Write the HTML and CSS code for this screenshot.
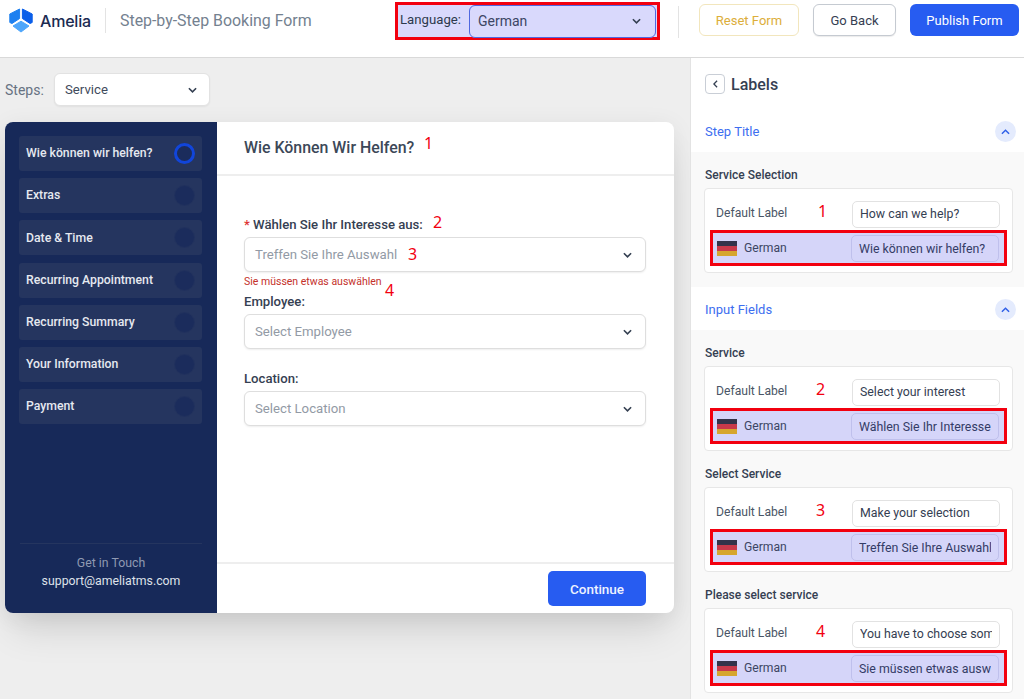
FILE: index.html
```html
<!DOCTYPE html>
<html lang="en">
<head>
<meta charset="utf-8">
<title>Step-by-Step Booking Form</title>
<link rel="stylesheet" href="styles.css">
</head>
<body>
<header class="topbar">
  <div class="brand">
    <svg class="logo" viewBox="0 0 24 25" width="24" height="25">
      <path d="M10.6 1 L10.6 10.5 L3 15.5 L0.8 14.5 L0.8 6 Z" fill="#1e80f0" stroke="#1e80f0" stroke-linejoin="round"/>
      <path d="M13.4 1 L13.4 10.5 L21 15.5 L23.2 14.5 L23.2 6 Z" fill="#0b5fe9" stroke="#0b5fe9" stroke-linejoin="round"/>
      <path d="M12 13.2 L20 18 L12 24 L4 18 Z" fill="#4ea6fb" stroke="#4ea6fb" stroke-linejoin="round"/>
    </svg>
    <span class="brand-name">Amelia</span>
  </div>
  <span class="page-title">Step-by-Step Booking Form</span>
  <div class="lang-box">
    <span class="lang-label">Language:</span>
    <div class="lang-select">
      <span>German</span>
      <svg class="chev" viewBox="0 0 10 6" width="9" height="6"><path d="M1 1l4 4 4-4" fill="none" stroke="#354052" stroke-width="1.8"/></svg>
    </div>
  </div>
  <span class="top-divider"></span>
  <button class="btn btn-reset">Reset Form</button>
  <button class="btn btn-back">Go Back</button>
  <button class="btn btn-publish">Publish Form</button>
</header>

<div class="workspace">
  <main class="canvas">
    <div class="steps-row">
      <span class="steps-label">Steps:</span>
      <div class="steps-select">
        <span>Service</span>
        <svg class="chev" viewBox="0 0 10 6" width="9" height="6"><path d="M1 1l4 4 4-4" fill="none" stroke="#354052" stroke-width="1.8"/></svg>
      </div>
    </div>
    <div class="card">
      <aside class="sidebar">
        <ul class="step-list">
          <li class="step"><span>Wie können wir helfen?</span><i class="dot dot-active"></i></li>
          <li class="step"><span>Extras</span><i class="dot"></i></li>
          <li class="step"><span>Date &amp; Time</span><i class="dot"></i></li>
          <li class="step"><span>Recurring Appointment</span><i class="dot"></i></li>
          <li class="step"><span>Recurring Summary</span><i class="dot"></i></li>
          <li class="step"><span>Your Information</span><i class="dot"></i></li>
          <li class="step"><span>Payment</span><i class="dot"></i></li>
        </ul>
        <div class="contact">
          <div class="contact-title">Get in Touch</div>
          <div class="contact-mail">support@ameliatms.com</div>
        </div>
      </aside>
      <section class="form">
        <div class="form-head">
          <h2>Wie Können Wir Helfen?</h2>
          <span class="mark mark-title">1</span>
        </div>
        <div class="form-body">
          <div class="field field-first">
            <label><em>*</em> Wählen Sie Ihr Interesse aus:</label>
            <span class="mark mark-label">2</span>
            <div class="select">
              <span>Treffen Sie Ihre Auswahl</span>
              <svg class="chev" viewBox="0 0 10 6" width="9" height="6"><path d="M1 1l4 4 4-4" fill="none" stroke="#354052" stroke-width="1.8"/></svg>
              <span class="mark mark-select">3</span>
            </div>
            <div class="error">Sie müssen etwas auswählen</div>
            <span class="mark mark-error">4</span>
          </div>
          <div class="field field-employee">
            <label>Employee:</label>
            <div class="select">
              <span>Select Employee</span>
              <svg class="chev" viewBox="0 0 10 6" width="9" height="6"><path d="M1 1l4 4 4-4" fill="none" stroke="#354052" stroke-width="1.8"/></svg>
            </div>
          </div>
          <div class="field field-location">
            <label>Location:</label>
            <div class="select">
              <span>Select Location</span>
              <svg class="chev" viewBox="0 0 10 6" width="9" height="6"><path d="M1 1l4 4 4-4" fill="none" stroke="#354052" stroke-width="1.8"/></svg>
            </div>
          </div>
        </div>
        <div class="form-foot"><button class="btn-continue">Continue</button></div>
      </section>
    </div>
  </main>

  <aside class="panel">
    <div class="panel-head">
      <span class="back"><svg viewBox="0 0 6 10" width="5" height="8"><path d="M5 1L1 5l4 4" fill="none" stroke="#354052" stroke-width="1.6"/></svg></span>
      <h3>Labels</h3>
    </div>

    <div class="acc-head">
      <span>Step Title</span>
      <span class="acc-toggle"><svg viewBox="0 0 10 6" width="9" height="6"><path d="M1 5l4-4 4 4" fill="none" stroke="#2e5fe8" stroke-width="1.6"/></svg></span>
    </div>
    <div class="acc-body">
      <div class="group">
        <h4>Service Selection</h4>
        <div class="tbox">
          <div class="trow"><span class="tname">Default Label</span><span class="mark mark-row mark-row-first">1</span><input class="tinput" value="How can we help?"></div>
          <div class="trow trow-lang"><svg class="flag" viewBox="0 0 20 15" width="20" height="15"><rect width="20" height="5" fill="#33334a"/><rect y="5" width="20" height="5" fill="#c8394a"/><rect y="10" width="20" height="5" fill="#d6a62e"/></svg><span class="tname tname-lang">German</span><input class="tinput tinput-lang" value="Wie können wir helfen?"></div>
        </div>
      </div>
    </div>

    <div class="acc-head">
      <span>Input Fields</span>
      <span class="acc-toggle"><svg viewBox="0 0 10 6" width="9" height="6"><path d="M1 5l4-4 4 4" fill="none" stroke="#2e5fe8" stroke-width="1.6"/></svg></span>
    </div>
    <div class="acc-body">
      <div class="group">
        <h4>Service</h4>
        <div class="tbox">
          <div class="trow"><span class="tname">Default Label</span><span class="mark mark-row">2</span><input class="tinput" value="Select your interest"></div>
          <div class="trow trow-lang"><svg class="flag" viewBox="0 0 20 15" width="20" height="15"><rect width="20" height="5" fill="#33334a"/><rect y="5" width="20" height="5" fill="#c8394a"/><rect y="10" width="20" height="5" fill="#d6a62e"/></svg><span class="tname tname-lang">German</span><input class="tinput tinput-lang" value="Wählen Sie Ihr Interesse aus"></div>
        </div>
      </div>
      <div class="group">
        <h4>Select Service</h4>
        <div class="tbox">
          <div class="trow"><span class="tname">Default Label</span><span class="mark mark-row">3</span><input class="tinput" value="Make your selection"></div>
          <div class="trow trow-lang"><svg class="flag" viewBox="0 0 20 15" width="20" height="15"><rect width="20" height="5" fill="#33334a"/><rect y="5" width="20" height="5" fill="#c8394a"/><rect y="10" width="20" height="5" fill="#d6a62e"/></svg><span class="tname tname-lang">German</span><input class="tinput tinput-lang" value="Treffen Sie Ihre Auswahl"></div>
        </div>
      </div>
      <div class="group">
        <h4>Please select service</h4>
        <div class="tbox">
          <div class="trow"><span class="tname">Default Label</span><span class="mark mark-row">4</span><input class="tinput" value="You have to choose something"></div>
          <div class="trow trow-lang"><svg class="flag" viewBox="0 0 20 15" width="20" height="15"><rect width="20" height="5" fill="#33334a"/><rect y="5" width="20" height="5" fill="#c8394a"/><rect y="10" width="20" height="5" fill="#d6a62e"/></svg><span class="tname tname-lang">German</span><input class="tinput tinput-lang" value="Sie müssen etwas auswählen"></div>
        </div>
      </div>
    </div>
  </aside>
</div>
</body>
</html>
```

FILE: styles.css
```css
* { box-sizing: border-box; }
html, body { margin: 0; height: 100%; overflow: hidden; }
body {
  width: 1024px; height: 699px;
  font-family: Roboto, "Liberation Sans", sans-serif;
  color: #354052; background: #eee;
  display: flex; flex-direction: column;
}
button { font-family: inherit; cursor: pointer; }

.topbar {
  height: 58px; flex: none; background: #fff;
  border-bottom: 1px solid #d9d9d9;
  display: flex; align-items: flex-start;
  padding: 2px 5px 0 9px;
}
.topbar > * { flex: none; }
.brand {
  display: flex; align-items: center; gap: 7px; height: 25px; width: 97px;
  margin-top: 6px; border-right: 1px solid #e3e3e3;
}
.logo { display: block; }
.brand-name { font-family: Inter, Roboto, sans-serif; font-size: 16px; font-weight: 500; color: #1b2b52; letter-spacing: -0.2px; }
.page-title { font-size: 15.9px; color: #74818f; margin: 9px 0 0 14px; line-height: 19px; width: 275px; }
.lang-box {
  width: 265px; height: 38px; border: 3px solid #f2000f; background: #d9d9fc;
  display: flex; align-items: center; gap: 7px; padding: 0 1px 0 2px;
}
.lang-label { font-size: 13.2px; color: #2d3a4d; width: 62px; margin-bottom: 3px; }
.lang-select {
  flex: 1; height: 33px; border: 1px solid #4f68e0; border-radius: 6px; background: #d9d9fc;
  display: flex; align-items: center; justify-content: space-between;
  padding: 0 14px 0 8px; font-size: 14px; color: #3c4664;
}
.top-divider { width: 1px; height: 32px; background: #e3e3e3; margin: 4px 20px 0 18px; }
.btn {
  height: 32px; border-radius: 6px; background: #fff; font-size: 13px; margin-top: 2px;
  border: 1px solid #d4d8de; padding: 0;
}
.btn-reset { width: 100px; border-color: #f2e6bd; color: #dcae3a; }
.btn-back { width: 83px; margin-left: 14px; border-color: #c5cad1; color: #354052; box-shadow: 0 1px 1px rgba(0,0,0,.08); }
.btn-publish { width: 109px; margin-left: 14px; border: 0; background: #275cf1; color: #fff; }

.workspace { flex: 1; display: flex; min-height: 0; }
.canvas { width: 690px; flex: none; padding: 15px 0 0 5px; }
.steps-row { display: flex; align-items: center; gap: 9px; height: 33px; }
.steps-label { font-size: 14px; color: #677282; width: 40px; }
.steps-select {
  width: 156px; height: 33px; background: #fff; border: 1px solid #e2e2e2; border-radius: 6px;
  display: flex; align-items: center; justify-content: space-between;
  padding: 0 12px 0 10px; font-size: 13.2px; color: #3f4a5c;
  box-shadow: 0 1px 2px rgba(0,0,0,.06);
}

.card {
  width: 669px; height: 491px; margin-top: 16px; border-radius: 8px; background: #fff;
  display: flex;
  box-shadow: 0 24px 36px -8px rgba(0,0,0,.12), 0 4px 24px rgba(0,0,0,.07);
}
.sidebar {
  width: 212px; flex: none; background: #172959; border-radius: 8px 0 0 8px;
  padding: 14px 15px 0 14px; display: flex; flex-direction: column;
}
.step-list { list-style: none; margin: 0; padding: 0; display: flex; flex-direction: column; gap: 7.2px; flex: 1; }
.step {
  height: 35px; background: #25355f; border-radius: 3px; padding: 0 7px;
  display: flex; align-items: center; justify-content: space-between;
  font-size: 12.25px; font-weight: 500; color: #e6e9f0;
}
.step span { margin-bottom: 0.5px; }
.dot { width: 21px; height: 21px; border-radius: 50%; background: #1b2c5c; border: 1px solid #22325e; }
.dot-active { border: 3px solid #1145da; }
.contact {
  margin: 0 0 0 1px; border-top: 1px solid #25355f; height: 70px; padding-top: 10px;
  text-align: center; line-height: 18px; font-size: 12.3px;
}
.contact-title { color: #8f99b2; }
.contact-mail { color: #dfe2ea; }

.form { flex: 1; display: flex; flex-direction: column; position: relative; border-radius: 0 8px 8px 0; }
.form-head {
  height: 54px; border-bottom: 2px solid #eee; padding: 15px 28px 0 27px; position: relative;
  display: flex; align-items: flex-start;
}
.form-head h2 { margin: 1px 0 0; font-size: 15.9px; line-height: 20px; font-weight: 500; color: #3c4858; }
.form-body { flex: 1; padding: 0 28px 0 27px; }
.field { position: relative; }
.field label { display: block; font-size: 13.15px; font-weight: 500; line-height: 16px; color: #354052; }
.field label em { color: #d33; font-style: normal; }
.select {
  position: relative;
  height: 35px; margin-top: 4px; border: 1px solid #dedede; border-radius: 6px; background: #fff;
  display: flex; align-items: center; justify-content: space-between;
  padding: 0 13px 0 10px; font-size: 13.2px; color: #929aa5;
  box-shadow: 0 1px 2px rgba(0,0,0,.07);
}
.field-first { margin-top: 41px; }
.field-employee { margin-top: 6px; }
.field-location { margin-top: 22px; }
.error { font-size: 10.5px; color: #c4312b; line-height: 12px; margin-top: 4px; }
.form-foot {
  height: 51px; border-top: 2px solid #eee; display: flex; justify-content: flex-end;
  align-items: flex-start; padding: 7px 28px 0 0;
}
.btn-continue { width: 98px; height: 35px; border: 0; border-radius: 5px; background: #275cf1; color: #eef2ff; font-size: 13.5px; font-weight: 500; }

.mark { position: absolute; font-family: "Noto Sans", sans-serif; font-size: 16px; line-height: 18px; color: #f2000f; }
.mark-title { left: 207px; top: 12px; }
.mark-label { left: 189px; top: -4px; }
.mark-select { left: 163px; top: 7px; }
.mark-error { left: 141px; top: 64px; }
.mark-row { left: 106px; top: 2px; }
.mark-row-first { left: 108px; }

.panel { flex: 1; background: #fff; border-left: 1px solid #e3e3e3; overflow: hidden; }
.panel-head { height: 57px; display: flex; align-items: center; gap: 6px; padding: 0 0 5px 14px; }
.panel-head h3 { margin: 0; font-size: 16px; font-weight: 500; color: #354052; }
.back {
  width: 20px; height: 20px; border: 1px solid #c9ced6; border-radius: 4px;
  display: flex; align-items: center; justify-content: center;
}
.acc-head {
  height: 37px; display: flex; align-items: center; justify-content: space-between;
  padding: 0 8px 4px 14px; font-size: 13px; color: #3d6ef0;
}
.acc-toggle {
  width: 21px; height: 21px; border-radius: 50%; background: #e4ebfd;
  display: flex; align-items: center; justify-content: center;
}
.acc-body { background: #f9f9f9; padding: 0 11px 14px 13px; }
.acc-body + .acc-head { height: 43px; padding: 2px 8px 0 14px; }
.group { padding-top: 15px; }
.group h4 { margin: 0 0 5px 1px; font-size: 12px; line-height: 16px; font-weight: 500; color: #354052; }
.tbox {
  height: 85px; background: #fff; border: 1px solid #e7e7e7; border-radius: 4px; padding: 11px 5px 0 5px;
}
.trow { position: relative; display: flex; align-items: center; height: 28px; padding: 0 7px 0 6px; }
.tname { font-size: 12.15px; color: #4a5566; margin-bottom: 2px; }
.tinput {
  margin-left: auto; width: 148px; height: 27px; border: 1px solid #e2e2e2; border-radius: 5px;
  padding: 0 7px; font: 12.35px Roboto, sans-serif; color: #354052; background: #fff; outline: 0;
}
.trow-lang {
  height: 36px; margin-top: 2px; border: 3px solid #f2000f; background: #d5d5f9;
  padding: 0 5px 0 4px;
}
.flag { flex: none; margin-right: 7px; }
.tname-lang { color: #3c4664; margin-bottom: 0; }
.tinput-lang { background: #d5d5f9; border-color: #bfc0ec; color: #343c66; margin-top: 1px; }
```
